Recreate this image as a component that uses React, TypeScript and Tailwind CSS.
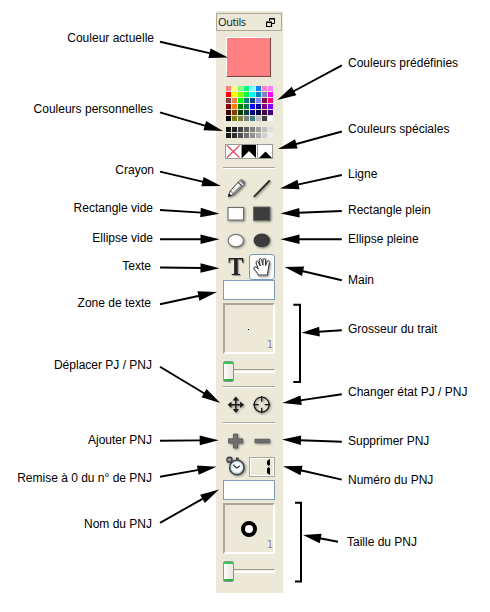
import type { ReactNode } from "react";

type Label = { text: string; cls: string };

const leftLabels: Label[] = [
  { text: "Couleur actuelle", cls: "mt-[30px] mr-[62px]" },
  { text: "Couleurs personnelles", cls: "mt-[55px] mr-[63px]" },
  { text: "Crayon", cls: "mt-[45px] mr-[62px]" },
  { text: "Rectangle vide", cls: "mt-[22px] mr-[63px]" },
  { text: "Ellipse vide", cls: "mt-[14px] mr-[63px]" },
  { text: "Texte", cls: "mt-[12px] mr-[65px]" },
  { text: "Zone de texte", cls: "mt-[21px] mr-[65px]" },
  { text: "Déplacer PJ / PNJ", cls: "mt-[46px] mr-[64px]" },
  { text: "Ajouter PNJ", cls: "mt-[59px] mr-[64px]" },
  { text: "Remise à 0 du n° de PNJ", cls: "mt-[22px] mr-[64px]" },
  { text: "Nom du PNJ", cls: "mt-[30px] mr-[64px]" },
];

const rightLabels: Label[] = [
  { text: "Couleurs prédéfinies", cls: "mt-[55px]" },
  { text: "Couleurs spéciales", cls: "mt-[50px]" },
  { text: "Ligne", cls: "mt-[29px]" },
  { text: "Rectangle plein", cls: "mt-[20px]" },
  { text: "Ellipse pleine", cls: "mt-[13px]" },
  { text: "Main", cls: "mt-[25px]" },
  { text: "Grosseur du trait", cls: "mt-[33px]" },
  { text: "Changer état PJ / PNJ", cls: "mt-[47px]" },
  { text: "Supprimer PNJ", cls: "mt-[33px]" },
  { text: "Numéro du PNJ", cls: "mt-[23px]" },
  { text: "Taille du PNJ", cls: "mt-[46px] -ml-px" },
];

// Each arrow runs from (x1, y1) to its tip (x2, y2).
const arrows = [
  [160, 41.7, 228, 57.5],
  [160, 112.3, 223, 131],
  [160, 171.7, 221, 186],
  [160, 210, 219.5, 213.7],
  [160, 239.2, 219.5, 239.2],
  [160, 267.5, 219.5, 268.3],
  [160, 304.3, 217, 292],
  [160, 366.7, 220.3, 403],
  [160, 440.7, 218.7, 440.2],
  [160, 476.8, 216.5, 466.8],
  [160, 522.9, 219, 489.5],
  [341.8, 65.3, 277.3, 100],
  [341.8, 131.5, 278, 149],
  [341.8, 175, 280, 188.5],
  [341.8, 211, 280.5, 213.5],
  [341.8, 239.2, 280.5, 239.2],
  [341.8, 280.2, 284.5, 267],
  [341.8, 330.2, 301.5, 332.8],
  [341.8, 394.3, 282.3, 403],
  [341.8, 441.8, 282, 439.6],
  [341.8, 479.6, 283, 466.3],
  [338, 541.8, 303, 535],
];

const palette = [
  ["#ff8080", "#ffff80", "#80ff80", "#00ff80", "#80ffff", "#0080ff", "#ff80c0", "#ff80ff"],
  ["#ff0000", "#ffff00", "#80ff00", "#00ff40", "#00ffff", "#0080c0", "#8080c0", "#ff00ff"],
  ["#804040", "#ff8040", "#00ff00", "#008080", "#004080", "#8080ff", "#800040", "#ff0080"],
  ["#800000", "#ff8000", "#008000", "#008040", "#0000ff", "#0000a0", "#800080", "#8000ff"],
  ["#400000", "#804000", "#004000", "#004040", "#000080", "#000040", "#400040", "#400080"],
  ["#000000", "#808000", "#808040", "#808080", "#408080", "#c0c0c0", "#404040", "#ffffff"],
];

const grays = [
  ["#101010", "#202020", "#404040", "#606060", "#808080", "#a0a0a0", "#c0c0c0", "#e0e0e0"],
  ["#181818", "#303030", "#505050", "#707070", "#909090", "#b0b0b0", "#d0d0d0", "#f0f0f0"],
];

function Swatches({ rows, className }: { rows: string[][]; className: string }) {
  return (
    <div className={`ml-[10px] grid w-[47px] grid-cols-8 gap-px ${className}`}>
      {rows.flat().map((c, i) => (
        <div key={i} className="h-[5px] w-[5px]" style={{ backgroundColor: c }} />
      ))}
    </div>
  );
}

function Separator({ className }: { className: string }) {
  return <div className={`ml-[7px] h-[2px] w-[52px] border-t border-b border-t-[#aca899] border-b-white ${className}`} />;
}

function Icon({ children }: { children: ReactNode }) {
  return (
    <svg viewBox="0 0 26 26" className="h-[26px] w-[26px] shrink-0 overflow-visible [filter:drop-shadow(1px_1px_1px_rgba(0,0,0,0.45))]">
      {children}
    </svg>
  );
}

function Row({ children, className = "" }: { children: ReactNode; className?: string }) {
  return <div className={`ml-[7px] flex h-[26px] w-[52px] ${className}`}>{children}</div>;
}

function Field() {
  return <div className="ml-[7px] h-[20px] w-[52px] border border-[#7f9db9] bg-white" />;
}

function Preview({ children }: { children: ReactNode }) {
  return (
    <div className="relative mt-[3px] ml-[7px] flex h-[51px] w-[52px] items-center justify-center border-2 border-t-[#aca899] border-r-white border-b-white border-l-[#aca899]">
      {children}
      <span className="absolute right-0 bottom-px font-['DejaVu_Sans',sans-serif] text-[10px] leading-[12px] text-[#8a8799]">1</span>
    </div>
  );
}

function Slider() {
  return (
    <div className="mt-[7px] ml-[7px] flex h-[21px] w-[52px] items-center">
      <div className="flex h-[21px] w-[11px] flex-col justify-between overflow-hidden rounded-[2px] border border-[#8798a3] bg-linear-to-r from-white to-[#e6e5df]">
        <div className="h-[2px] bg-[#39c552]" />
        <div className="h-[2px] bg-[#2bb43c]" />
      </div>
      <div className="mb-px h-[4px] flex-1 border-t border-r border-b-2 border-t-[#9b9a92] border-r-white border-b-white bg-[#f0eee3]" />
    </div>
  );
}

function Arrow({ p }: { p: number[] }) {
  const [x1, y1, x2, y2] = p;
  const len = Math.hypot(x2 - x1, y2 - y1);
  const angle = (Math.atan2(y2 - y1, x2 - x1) * 180) / Math.PI;
  const head = len < 45 ? 18 : 19;
  return (
    <g transform={`translate(${x1} ${y1}) rotate(${angle})`}>
      <path d={`M0 0H${len - head + 1}`} stroke="#000" strokeWidth="1.9" />
      <path d={`M${len} 0L${len - head} -4.8V4.8Z`} fill="#000" />
    </g>
  );
}

export default function App() {
  return (
    <div className="relative flex h-[612px] w-[490px] overflow-hidden bg-white font-['Liberation_Sans',Arial,sans-serif] text-[12px] leading-4 text-black">
      <div className="flex w-[216px] flex-col items-end">
        {leftLabels.map((l) => (
          <div key={l.text} className={`h-4 whitespace-nowrap ${l.cls}`}>{l.text}</div>
        ))}
      </div>

      <div className="mt-[11px] h-[582px] w-[67px] bg-[#ece9d8] pt-[2px]">
        <div className="flex h-[18px] w-[66px] items-center justify-between border border-[#aca899] pr-[6px] pl-px">
          <span className="font-['Open_Sans',sans-serif] text-[11px] leading-4 tracking-[-0.4px] text-[#151527]">Outils</span>
          <svg viewBox="0 0 9 9" className="h-[9px] w-[9px]">
            <path d="M3.5 3V.5h5v5H6M3 1h6" fill="none" stroke="#000" strokeWidth="1" />
            <path d="M.5 4.5h5v4h-5zM0 4.2h6" fill="none" stroke="#000" strokeWidth="1.2" />
          </svg>
        </div>

        <div className="mt-[6px] ml-[10px] h-[40px] w-[45px] border border-t-white border-r-[#794444] border-b-[#794444] border-l-white bg-[#ff8080]" />
        <Swatches rows={palette} className="mt-[9px]" />
        <Swatches rows={grays} className="mt-[6px]" />

        <div className="mt-[6px] ml-[9px] h-[15px] w-[48px]">
          <svg viewBox="0 0 48 15" className="h-[15px] w-[48px]">
            <rect x=".5" y=".5" width="47" height="14" fill="#fff" stroke="#999" />
            <path d="M2 1.5L14.5 13.5M14.5 1.5L2 13.5" stroke="#e04656" strokeWidth="1.1" />
            <path d="M17 1H31V14L24 7L17 14Z" fill="#000" />
            <path d="M34 14L40.5 7.5L47 14Z" fill="#000" />
            <path d="M16.5 1V14M32.5 1V14" stroke="#999" strokeWidth="1" />
          </svg>
        </div>

        <Separator className="mt-[8px]" />

        <Row className="mt-[7px]">
          <Icon>
            <path d="M5.5 20.5L7 15.2L16.6 4.7C17.8 3.7 19.2 3.8 20.4 4.8C21.8 6 21.9 7.6 20.8 8.9L11 18.4Z" fill="#f5f5f5" stroke="#444" strokeWidth="1" />
            <path d="M17.5 4.3C18.6 3.7 19.6 4 20.5 4.9C21.7 6.1 21.8 7.3 21 8.5L19.6 7.8L17.2 5.6Z" fill="#777" />
            <path d="M15.2 6.4L19 10" stroke="#444" strokeWidth="1.2" />
            <path d="M10.4 17.6L18.2 9.9" stroke="#888" strokeWidth="1.5" />
            <path d="M7 15.4L8.9 15.7L9.3 17.6L11 18.4" fill="none" stroke="#666" strokeWidth=".8" />
            <path d="M4.9 21.1L5.9 17.2L8.9 19.8Z" fill="#222" />
          </Icon>
          <Icon>
            <path d="M5.3 20.3L20.3 5" stroke="#2c2c2c" strokeWidth="1.8" strokeLinecap="round" />
          </Icon>
        </Row>
        <Row>
          <Icon>
            <rect x="5" y="5.5" width="15.5" height="12.5" fill="#fff" stroke="#6d6d6d" strokeWidth="1.1" />
          </Icon>
          <Icon>
            <rect x="4.5" y="5" width="16.5" height="13.5" fill="#3c3c3c" stroke="#666" strokeWidth=".8" />
          </Icon>
        </Row>
        <Row>
          <Icon>
            <ellipse cx="12.8" cy="12.6" rx="7.7" ry="6.2" fill="#fff" stroke="#777" strokeWidth="1.2" />
          </Icon>
          <Icon>
            <ellipse cx="12.8" cy="12.4" rx="8.2" ry="6.8" fill="#3c3c3c" />
          </Icon>
        </Row>
        <Row>
          <div className="flex h-[26px] w-[26px] scale-x-[0.92] items-center justify-center font-['Liberation_Serif',serif] text-[25px] leading-[26px] font-bold text-[#222] [text-shadow:1px_1px_1px_rgba(0,0,0,0.4)]">T</div>
          <div className="flex h-[26px] w-[26px] items-center justify-center rounded-[3px] border border-[#7899b5] bg-[#fcfcfa]">
            <Icon>
              <path
                d="M9.6 21.5C8.8 18.8 6.3 16.8 5.1 14.8C4.3 13.4 5.9 12.2 7.2 13.2L9.3 15L7.1 8.9C6.6 7.2 8.6 6.4 9.3 8L11.3 12L10.2 6.3C9.9 4.5 12.1 4 12.6 5.8L13.9 11.3L14.1 5.7C14.2 4.1 16.4 4.1 16.5 5.8L16.6 11.5L18.1 7.6C18.7 6.2 20.7 6.8 20.3 8.4L19.5 14.2C19.2 17 18.4 18.8 18.2 21.5Z"
                fill="#fff"
                stroke="#333"
                strokeWidth="1"
                strokeLinejoin="round"
              />
              <path d="M10 20.9H18.1" stroke="#999" strokeWidth="1.8" />
            </Icon>
          </div>
        </Row>
        <Field />
        <Preview>
          <span className="mt-[1px] mr-[1px] h-px w-px bg-black" />
        </Preview>
        <Slider />

        <Separator className="mt-[4px]" />
        <Row className="mt-[4px]">
          <Icon>
            <path d="M12.8 6.5V19.5M6.5 12.7H19.5" stroke="#1a1a1a" strokeWidth="1.4" />
            <path d="M12.8 4.6L16 8.4H9.6ZM12.8 20.8L16 17H9.6ZM4.7 12.7L8.5 9.5V15.9ZM20.9 12.7L17.1 9.5V15.9Z" fill="#1a1a1a" />
          </Icon>
          <Icon>
            <circle cx="12.7" cy="12.7" r="7.5" fill="none" stroke="#1a1a1a" strokeWidth="1.3" />
            <path d="M12.7 4.2V9.7M12.7 15.7V21.2M4.2 12.7H9.7M15.7 12.7H21.2" stroke="#1a1a1a" strokeWidth="1.3" />
          </Icon>
        </Row>
        <Separator className="mt-[4px]" />
        <Row className="mt-[4px]">
          <Icon>
            <path d="M10.4 6H14.6V10.8H19.5V15H14.6V20H10.4V15H5.5V10.8H10.4Z" fill="#707070" stroke="#555" strokeWidth=".8" />
          </Icon>
          <Icon>
            <rect x="6" y="11.2" width="14.5" height="3.6" fill="#707070" stroke="#555" strokeWidth=".8" />
          </Icon>
        </Row>
        <Row>
          <Icon>
            <circle cx="6.5" cy="5.7" r="2.5" fill="#999" stroke="#444" strokeWidth="1.4" />
            <path d="M7.8 7.2L9.5 9M13 4.2L15.6 5" stroke="#333" strokeWidth="2" />
            <circle cx="13.9" cy="13.4" r="7.2" fill="#cfe0e4" stroke="#3f474a" strokeWidth="1.6" />
            <circle cx="13.9" cy="13.4" r="5.2" fill="#f5fafa" />
            <path d="M10.3 10.8L13.6 14L17 12" fill="none" stroke="#333" strokeWidth="1.2" />
          </Icon>
          <div className="mt-[3px] flex h-[20px] w-[26px] flex-col items-end gap-px border border-[#aca899] pt-px pr-[4px] shadow-[inset_1px_1px_0_#fff,inset_-1px_-1px_0_#fff]">
            <div className="h-[7px] w-[3px] bg-black [clip-path:polygon(100%_0,100%_85%,50%_100%,0_75%,0_30%)]" />
            <div className="h-[8px] w-[3px] bg-black [clip-path:polygon(50%_0,100%_15%,100%_100%,0_75%,0_20%)]" />
          </div>
        </Row>
        <Field />
        <Preview>
          <div className="mt-px h-[16px] w-[16px] rounded-full border-4 border-black bg-white" />
        </Preview>
        <Slider />
      </div>

      <div className="flex flex-col pl-[65px]">
        {rightLabels.map((l) => (
          <div key={l.text} className={`h-4 whitespace-nowrap ${l.cls}`}>{l.text}</div>
        ))}
      </div>

      <svg viewBox="0 0 490 612" className="pointer-events-none absolute inset-0 h-[612px] w-[490px]">
        {arrows.map((p, i) => (
          <Arrow key={i} p={p} />
        ))}
        <path d="M293.3 304.7H300V382H293.3" fill="none" stroke="#000" strokeWidth="2" />
        <path d="M295 502.7H301V581.6H295" fill="none" stroke="#000" strokeWidth="2" />
      </svg>
    </div>
  );
}
